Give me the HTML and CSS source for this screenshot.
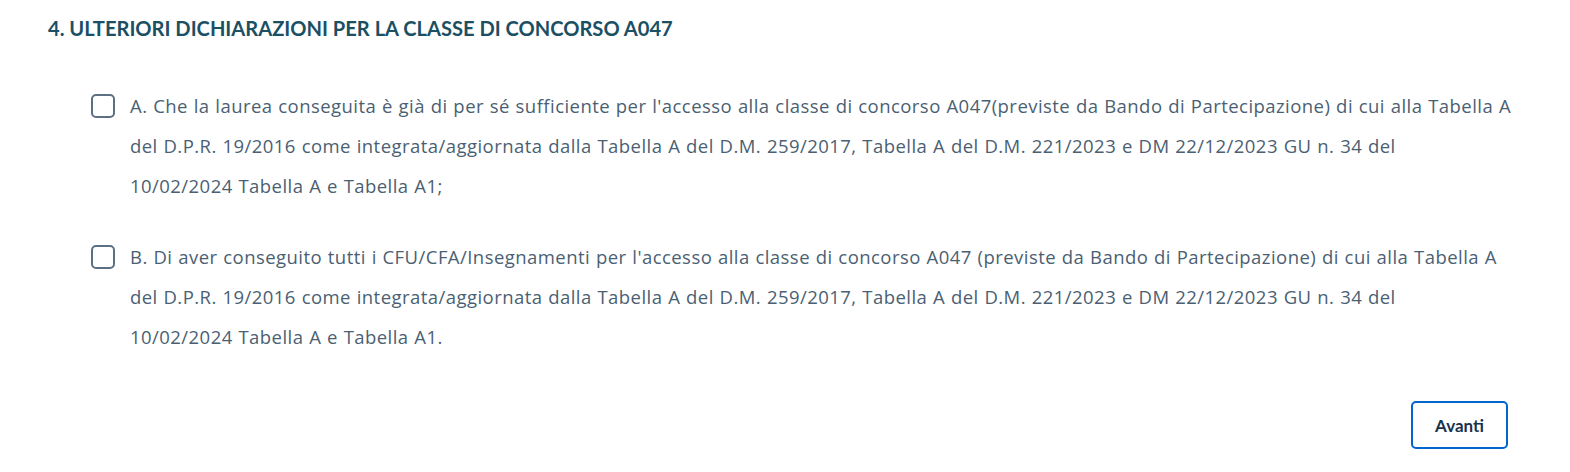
FILE: index.html
```html
<!DOCTYPE html>
<html lang="it">
<head>
<meta charset="utf-8">
<title>Dichiarazioni</title>
<link rel="stylesheet" href="styles.css">
</head>
<body>
<main class="page">
  <h2 class="section-title">4. ULTERIORI DICHIARAZIONI PER LA CLASSE DI CONCORSO A047</h2>
  <div class="checks">
    <label class="check">
      <span class="box"></span>
      <span class="check-text">A. Che la laurea conseguita è già di per sé sufficiente per l'accesso alla classe di concorso A047(previste da Bando di Partecipazione) di cui alla Tabella A<br>del D.P.R. 19/2016 come integrata/aggiornata dalla Tabella A del D.M. 259/2017, Tabella A del D.M. 221/2023 e DM 22/12/2023 GU n. 34 del<br>10/02/2024 Tabella A e Tabella A1;</span>
    </label>
    <label class="check">
      <span class="box"></span>
      <span class="check-text">B. Di aver conseguito tutti i CFU/CFA/Insegnamenti per l'accesso alla classe di concorso A047 (previste da Bando di Partecipazione) di cui alla Tabella A<br>del D.P.R. 19/2016 come integrata/aggiornata dalla Tabella A del D.M. 259/2017, Tabella A del D.M. 221/2023 e DM 22/12/2023 GU n. 34 del<br>10/02/2024 Tabella A e Tabella A1.</span>
    </label>
  </div>
  <div class="actions">
    <button class="btn" type="button">Avanti</button>
  </div>
</main>
</body>
</html>
```

FILE: styles.css
```css
* { box-sizing: border-box; }
html, body { margin: 0; background: #ffffff; }
body {
  font-family: "Open Sans", Lato, sans-serif;
  color: #4b5f73;
}
.page {
  padding: 14px 38px 0 48px;
}
.section-title {
  margin: 0;
  font-family: Lato, "Open Sans", sans-serif;
  font-size: 20.1px;
  line-height: 28px;
  font-weight: 700;
  color: #1b4f63;
}
.checks {
  margin-top: 44px;
  padding-left: 43px;
  display: flex;
  flex-direction: column;
  gap: 31px;
}
.check {
  display: flex;
  align-items: flex-start;
  gap: 15px;
}
.box {
  flex: 0 0 auto;
  width: 24px;
  height: 24px;
  margin-top: 8px;
  border: 2px solid #5d7083;
  border-radius: 5px;
}
.check-text {
  font-size: 18.5px;
  line-height: 40px;
  letter-spacing: 0.45px;
  word-spacing: 0.5px;
  white-space: nowrap;
}
.actions {
  display: flex;
  justify-content: flex-end;
  margin-top: 44px;
  padding-right: 24px;
}
.btn {
  width: 97px;
  height: 48px;
  border: 2px solid #0066cc;
  border-radius: 5px;
  background: #ffffff;
  font-family: Lato, "Open Sans", sans-serif;
  font-size: 17px;
  font-weight: 700;
  color: #17324d;
}
```
